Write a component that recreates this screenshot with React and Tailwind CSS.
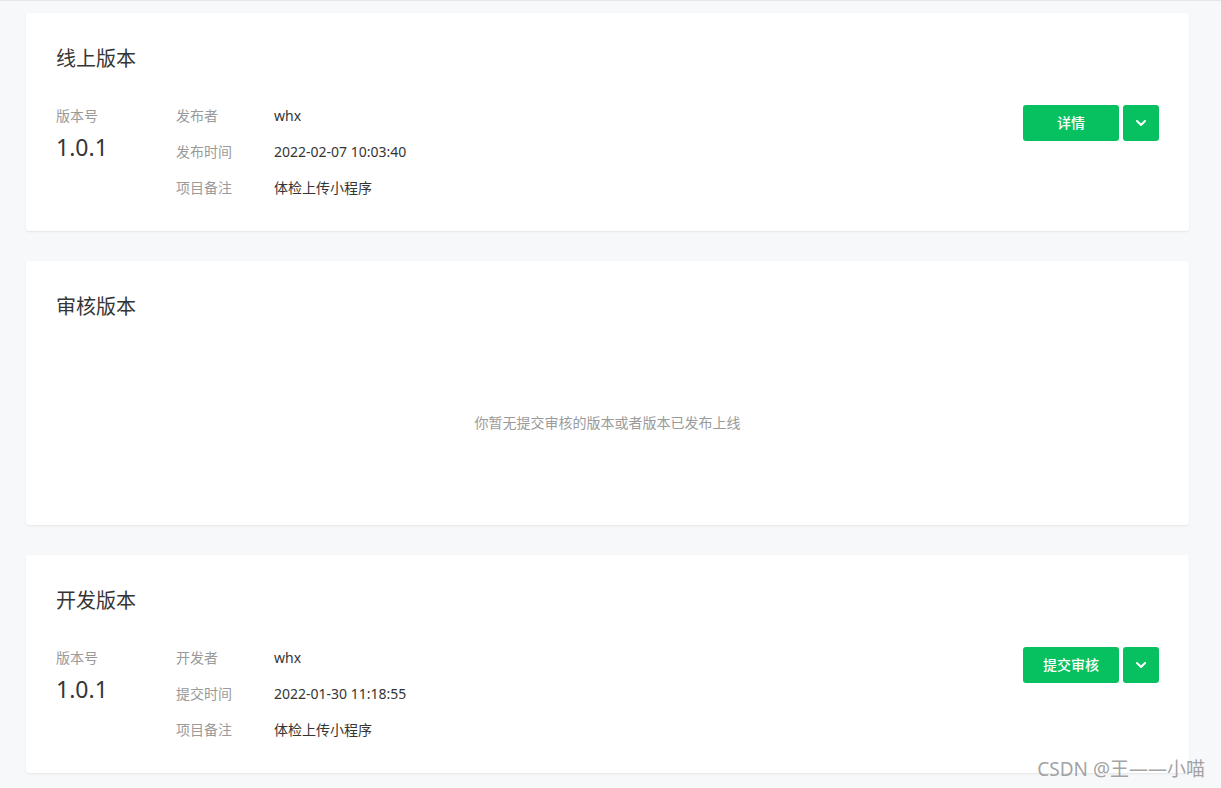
const font = { fontFamily: '"Noto Sans", "Noto Sans CJK SC", sans-serif' }

function InfoRow({ label, value }) {
  return (
    <div className="flex h-[22px] items-center text-sm">
      <span className="w-[98px] text-[#9a9a9a]">{label}</span>
      <span className="text-[#353535]">{value}</span>
    </div>
  )
}

function Chevron() {
  return (
    <svg className="w-4 h-4" fill="none" viewBox="0 0 24 24" stroke="currentColor" strokeWidth={3}>
      <path strokeLinecap="round" strokeLinejoin="round" d="M6 9l6 6 6-6" />
    </svg>
  )
}

function VersionCard({ title, rows, action }) {
  return (
    <div className="bg-white rounded-[3px] shadow-[0_1px_2px_rgba(0,0,0,0.08)] px-[30px] pt-8 pb-8">
      <h2 className="text-xl leading-7 text-[#353535]">{title}</h2>
      <div className="flex mt-8">
        <div className="w-[120px]">
          <div className="text-sm leading-[22px] text-[#9a9a9a]">版本号</div>
          <div className="text-[23px] leading-8 mt-1 text-[#353535]">1.0.1</div>
        </div>
        <div className="flex flex-col gap-[14px] flex-1">
          {rows.map(r => <InfoRow key={r[0]} label={r[0]} value={r[1]} />)}
        </div>
        <div className="flex gap-1">
          <button className="w-24 h-9 rounded-[3px] bg-[#07c160] text-white text-sm font-medium">{action}</button>
          <button className="w-9 h-9 rounded-[3px] bg-[#07c160] text-white flex items-center justify-center"><Chevron /></button>
        </div>
      </div>
    </div>
  )
}

export default function App() {
  return (
    <div className="relative min-h-[788px] bg-[#f7f8fa] border-t border-[#e4e6ea] pl-[26px] pr-8 pt-3 pb-4 flex flex-col gap-[30px]" style={font}>
      <VersionCard
        title="线上版本"
        rows={[['发布者', 'whx'], ['发布时间', '2022-02-07 10:03:40'], ['项目备注', '体检上传小程序']]}
        action="详情"
      />
      <div className="bg-white rounded-[3px] shadow-[0_1px_2px_rgba(0,0,0,0.08)] px-[30px] pt-8">
        <h2 className="text-xl leading-7 text-[#353535]">审核版本</h2>
        <div className="h-[204px] flex items-center justify-center text-sm text-[#9a9a9a]">你暂无提交审核的版本或者版本已发布上线</div>
      </div>
      <VersionCard
        title="开发版本"
        rows={[['开发者', 'whx'], ['提交时间', '2022-01-30 11:18:55'], ['项目备注', '体检上传小程序']]}
        action="提交审核"
      />
      <div className="absolute right-4 bottom-[6px] text-[19px] text-[#8a8a8a]/80">CSDN @王——小喵</div>
    </div>
  )
}
